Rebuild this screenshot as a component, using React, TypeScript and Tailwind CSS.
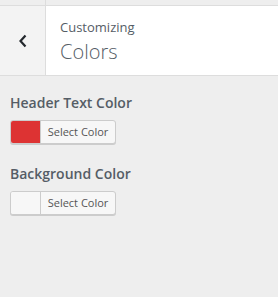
export default function App() {
  const font = { fontFamily: '"Open Sans", "Liberation Sans", sans-serif' };
  return (
    <div className="w-[278px] h-[297px] bg-[#eeeeee] overflow-hidden" style={font}>
      {/* top strip */}
      <div className="flex h-[6px] border-b border-[#dddddd]">
        <div className="w-[46px] border-r border-[#dddddd]" />
      </div>
      {/* section header */}
      <div className="flex h-[70px] bg-white border-b border-[#dddddd]">
        <button className="w-[46px] flex items-center justify-center bg-[#f3f3f3] border-r border-[#dddddd] text-[#23282d]">
          <svg width="12" height="14" viewBox="0 0 12 14" fill="none">
            <path d="M8.5 1.5 L3.5 7 L8.5 12.5" stroke="currentColor" strokeWidth="2.2" />
          </svg>
        </button>
        <div className="flex flex-col pl-[14px] pt-[12px]">
          <span className="text-[13px] leading-[18px] text-[#555d66]">Customizing</span>
          <span className="text-[20px] leading-[26px] mt-[3px] font-light text-[#555d66]">Colors</span>
        </div>
      </div>
      {/* controls */}
      <div className="px-[10px] pt-[15px] flex flex-col gap-[18px]">
        <div className="flex flex-col gap-[5px]">
          <span className="text-[14px] leading-[24px] font-semibold text-[#555d66]">Header Text Color</span>
          <ColorButton color="#dd3333" />
        </div>
        <div className="flex flex-col gap-[5px]">
          <span className="text-[14px] leading-[24px] font-semibold text-[#555d66]">Background Color</span>
          <ColorButton color="#f7f7f7" />
        </div>
      </div>
    </div>
  );
}

function ColorButton({ color }: { color: string }) {
  return (
    <button className="flex w-[106px] h-[24px] rounded-[3px] border border-[#cccccc] bg-[#f7f7f7] overflow-hidden shadow-[0_1px_0_#cccccc]">
      <span className="w-[30px] h-full border-r border-[#cccccc]" style={{ backgroundColor: color }} />
      <span className="flex-1 flex items-center justify-center text-[11px] text-[#555555]">Select Color</span>
    </button>
  );
}
